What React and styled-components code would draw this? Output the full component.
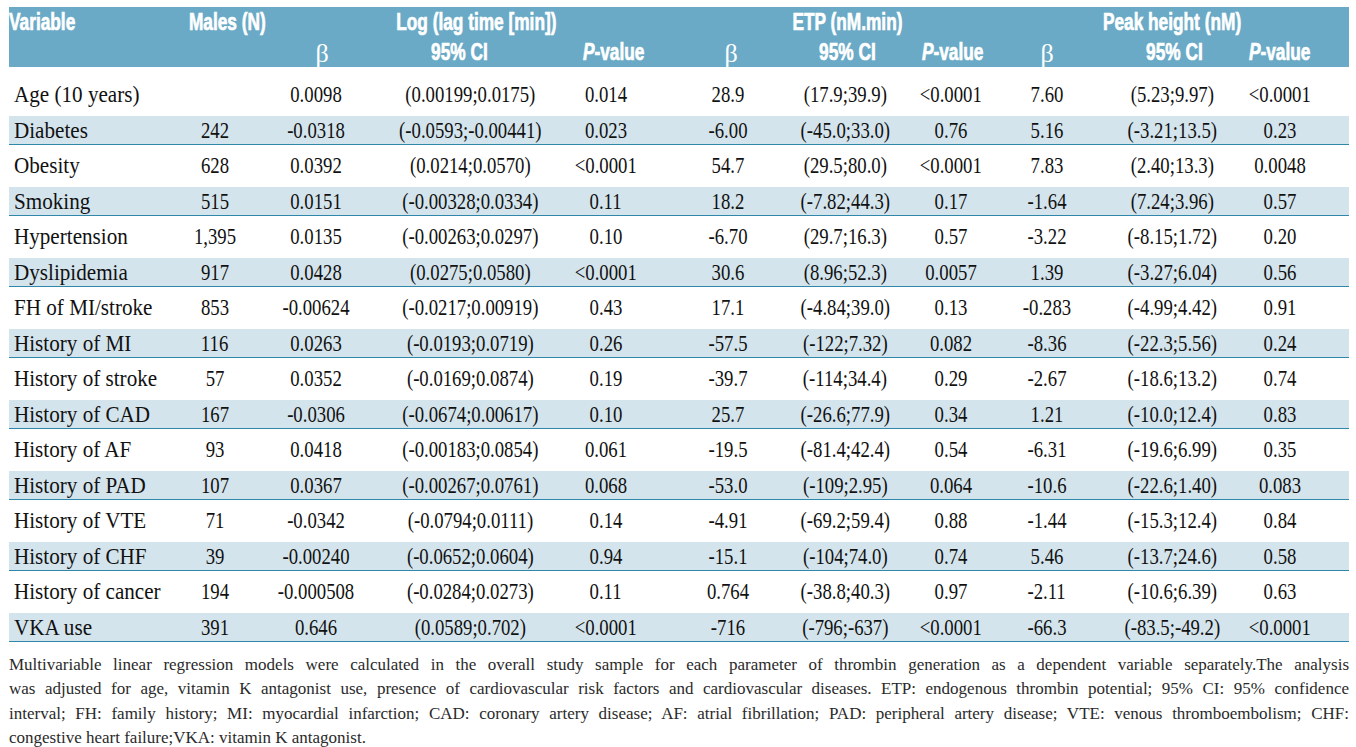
import React from "react"
import styled, { createGlobalStyle } from "styled-components"

const Global = createGlobalStyle`
  html, body {
    margin: 0;
    padding: 0;
    background: #ffffff;
  }
`

const COLS = "171px 70px 132px 176px 96px 148px 86px 126px 66px 184px 32px 1fr"

const Page = styled.div`
  width: 1340px;
  padding: 7px 7px 0 9px;
`

const Head = styled.div`
  background: #6aaac6;
  height: 60px;
  display: grid;
  grid-template-columns: ${COLS};
  grid-template-rows: 29px 31px;
`

const HeadCell = styled.div`
  grid-column: ${p => p.col};
  grid-row: ${p => p.row};
  display: flex;
  align-items: center;
  justify-content: ${p => (p.left ? "flex-start" : "center")};
  padding-left: ${p => (p.nudge > 0 ? p.nudge * 2 : 0)}px;
  padding-right: ${p => (p.nudge < 0 ? -p.nudge * 2 : 0)}px;
  white-space: nowrap;
`

const HeadText = styled.span`
  display: inline-block;
  font-family: "Liberation Sans", Arial, sans-serif;
  font-weight: bold;
  font-size: 24px;
  color: #ffffff;
  -webkit-text-stroke: 0.7px #ffffff;
  transform: scaleX(0.72);
  transform-origin: ${p => (p.left ? "left" : "center")} center;
  i {
    font-style: italic;
  }
`

const Beta = styled.span`
  font-family: "Liberation Serif", "Times New Roman", serif;
  font-size: 26px;
  color: #ffffff;
  margin-top: 4px;
`

const Body = styled.div`
  margin-top: 7px;
`

const Row = styled.div`
  display: grid;
  grid-template-columns: ${COLS};
  height: ${p => (p.shaded ? "28px" : "39px")};
  padding-bottom: ${p => (p.shaded ? "0" : "3px")};
  background: ${p => (p.shaded ? "#d4e4ec" : "transparent")};
  border-bottom: ${p => (p.shaded ? "1.5px solid #2f87a9" : "none")};
`

const Cell = styled.div`
  display: flex;
  align-items: center;
  justify-content: ${p => (p.left ? "flex-start" : "center")};
  padding-left: ${p => (p.left ? "5px" : "0")};
  white-space: nowrap;
`

const Txt = styled.span`
  display: inline-block;
  font-family: "Liberation Serif", "Times New Roman", serif;
  font-size: 24px;
  line-height: 24px;
  color: #111111;
  transform: scaleX(${p => (p.num ? 0.78 : 0.88)});
  transform-origin: ${p => (p.left ? "left" : "center")} center;
`

const Note = styled.div`
  margin-top: 11px;
  font-family: "Liberation Serif", "Times New Roman", serif;
  font-size: 17px;
  line-height: 24.3px;
  color: #2a2a2a;
`

const NoteLine = styled.div`
  white-space: nowrap;
  text-align: ${p => (p.last ? "left" : "justify")};
  text-align-last: ${p => (p.last ? "left" : "justify")};
`

const rows = [
  ["Age (10 years)", "", "0.0098", "(0.00199;0.0175)", "0.014", "28.9", "(17.9;39.9)", "<0.0001", "7.60", "(5.23;9.97)", "<0.0001"],
  ["Diabetes", "242", "-0.0318", "(-0.0593;-0.00441)", "0.023", "-6.00", "(-45.0;33.0)", "0.76", "5.16", "(-3.21;13.5)", "0.23"],
  ["Obesity", "628", "0.0392", "(0.0214;0.0570)", "<0.0001", "54.7", "(29.5;80.0)", "<0.0001", "7.83", "(2.40;13.3)", "0.0048"],
  ["Smoking", "515", "0.0151", "(-0.00328;0.0334)", "0.11", "18.2", "(-7.82;44.3)", "0.17", "-1.64", "(7.24;3.96)", "0.57"],
  ["Hypertension", "1,395", "0.0135", "(-0.00263;0.0297)", "0.10", "-6.70", "(29.7;16.3)", "0.57", "-3.22", "(-8.15;1.72)", "0.20"],
  ["Dyslipidemia", "917", "0.0428", "(0.0275;0.0580)", "<0.0001", "30.6", "(8.96;52.3)", "0.0057", "1.39", "(-3.27;6.04)", "0.56"],
  ["FH of MI/stroke", "853", "-0.00624", "(-0.0217;0.00919)", "0.43", "17.1", "(-4.84;39.0)", "0.13", "-0.283", "(-4.99;4.42)", "0.91"],
  ["History of MI", "116", "0.0263", "(-0.0193;0.0719)", "0.26", "-57.5", "(-122;7.32)", "0.082", "-8.36", "(-22.3;5.56)", "0.24"],
  ["History of stroke", "57", "0.0352", "(-0.0169;0.0874)", "0.19", "-39.7", "(-114;34.4)", "0.29", "-2.67", "(-18.6;13.2)", "0.74"],
  ["History of CAD", "167", "-0.0306", "(-0.0674;0.00617)", "0.10", "25.7", "(-26.6;77.9)", "0.34", "1.21", "(-10.0;12.4)", "0.83"],
  ["History of AF", "93", "0.0418", "(-0.00183;0.0854)", "0.061", "-19.5", "(-81.4;42.4)", "0.54", "-6.31", "(-19.6;6.99)", "0.35"],
  ["History of PAD", "107", "0.0367", "(-0.00267;0.0761)", "0.068", "-53.0", "(-109;2.95)", "0.064", "-10.6", "(-22.6;1.40)", "0.083"],
  ["History of VTE", "71", "-0.0342", "(-0.0794;0.0111)", "0.14", "-4.91", "(-69.2;59.4)", "0.88", "-1.44", "(-15.3;12.4)", "0.84"],
  ["History of CHF", "39", "-0.00240", "(-0.0652;0.0604)", "0.94", "-15.1", "(-104;74.0)", "0.74", "5.46", "(-13.7;24.6)", "0.58"],
  ["History of cancer", "194", "-0.000508", "(-0.0284;0.0273)", "0.11", "0.764", "(-38.8;40.3)", "0.97", "-2.11", "(-10.6;6.39)", "0.63"],
  ["VKA use", "391", "0.646", "(0.0589;0.702)", "<0.0001", "-716", "(-796;-637)", "<0.0001", "-66.3", "(-83.5;-49.2)", "<0.0001"],
]

const notes = [
  "Multivariable linear regression models were calculated in the overall study sample for each parameter of thrombin generation as a dependent variable separately.The analysis",
  "was adjusted for age, vitamin K antagonist use, presence of cardiovascular risk factors and cardiovascular diseases. ETP: endogenous thrombin potential; 95% CI: 95% confidence",
  "interval; FH: family history; MI: myocardial infarction; CAD: coronary artery disease; AF: atrial fibrillation; PAD: peripheral artery disease; VTE: venous thromboembolism; CHF:",
  "congestive heart failure;VKA: vitamin K antagonist.",
]

function PValue() {
  return (
    <HeadText>
      <i>P</i>-value
    </HeadText>
  )
}

export default function App() {
  return (
    <Page>
      <Global />
      <Head>
        <HeadCell col={1} row={1} left>
          <HeadText left>Variable</HeadText>
        </HeadCell>
        <HeadCell col={2} row={1} nudge={12}>
          <HeadText>Males (N)</HeadText>
        </HeadCell>
        <HeadCell col={4} row={1} nudge={6}>
          <HeadText>Log (lag time [min])</HeadText>
        </HeadCell>
        <HeadCell col={7} row={1} nudge={2}>
          <HeadText>ETP (nM.min)</HeadText>
        </HeadCell>
        <HeadCell col={10} row={1}>
          <HeadText>Peak height (nM)</HeadText>
        </HeadCell>

        <HeadCell col={3} row={2} nudge={6}>
          <Beta>β</Beta>
        </HeadCell>
        <HeadCell col={4} row={2} nudge={-11}>
          <HeadText>95% CI</HeadText>
        </HeadCell>
        <HeadCell col={5} row={2} nudge={8}>
          <PValue />
        </HeadCell>
        <HeadCell col={6} row={2} nudge={3}>
          <Beta>β</Beta>
        </HeadCell>
        <HeadCell col={7} row={2} nudge={2}>
          <HeadText>95% CI</HeadText>
        </HeadCell>
        <HeadCell col={8} row={2} nudge={2}>
          <PValue />
        </HeadCell>
        <HeadCell col={9} row={2}>
          <Beta>β</Beta>
        </HeadCell>
        <HeadCell col={10} row={2} nudge={2}>
          <HeadText>95% CI</HeadText>
        </HeadCell>
        <HeadCell col={11} row={2}>
          <PValue />
        </HeadCell>
      </Head>

      <Body>
        {rows.map((r, i) => (
          <Row key={r[0]} shaded={i % 2 === 1}>
            {r.map((v, j) => (
              <Cell key={j} left={j === 0}>
                <Txt left={j === 0} num={j > 0}>
                  {v}
                </Txt>
              </Cell>
            ))}
          </Row>
        ))}
      </Body>

      <Note>
        {notes.map((n, i) => (
          <NoteLine key={i} last={i === notes.length - 1}>
            {n}
          </NoteLine>
        ))}
      </Note>
    </Page>
  )
}
